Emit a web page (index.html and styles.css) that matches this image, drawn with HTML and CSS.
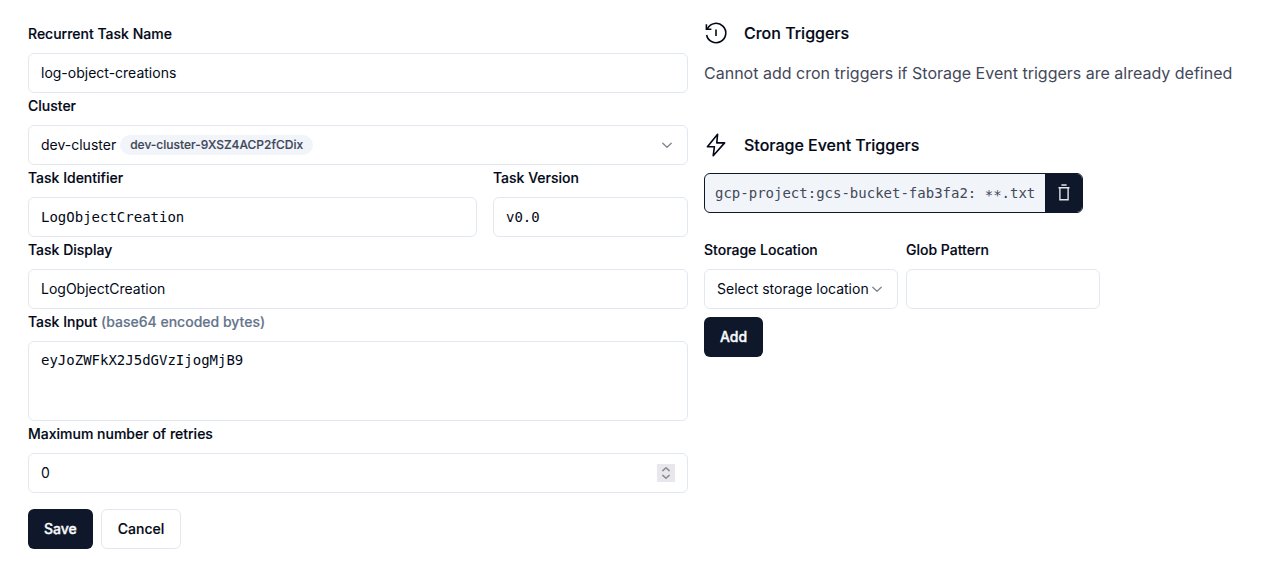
FILE: index.html
```html
<!DOCTYPE html>
<html lang="en">
<head>
<meta charset="utf-8">
<title>Recurrent Task</title>
<link rel="stylesheet" href="styles.css">
</head>
<body>
<main class="page">
  <form class="task-form">
    <label class="label">Recurrent Task Name</label>
    <div class="field">log-object-creations</div>
    <label class="label">Cluster</label>
    <div class="field select">
      <span class="cluster">dev-cluster <span class="badge">dev-cluster-9XSZ4ACP2fCDix</span></span>
      <svg class="chevron" viewBox="0 0 15 15"><path d="M3.5 5.8 7.5 9.6 11.5 5.8"/></svg>
    </div>
    <div class="pair">
      <div class="identifier"><label class="label">Task Identifier</label><div class="field mono">LogObjectCreation</div></div>
      <div class="version"><label class="label">Task Version</label><div class="field mono">v0.0</div></div>
    </div>
    <label class="label">Task Display</label>
    <div class="field">LogObjectCreation</div>
    <label class="label">Task Input <span class="muted">(base64 encoded bytes)</span></label>
    <div class="field mono textarea">eyJoZWFkX2J5dGVzIjogMjB9</div>
    <label class="label">Maximum number of retries</label>
    <div class="field select"><span>0</span>
      <span class="spinner"><svg viewBox="0 0 18 18"><path d="M5.8 6.6 9 3.8 12.2 6.6M5.8 11.4 9 14.2 12.2 11.4"/></svg></span>
    </div>
    <div class="actions"><button type="button" class="btn primary">Save</button><button type="button" class="btn outline">Cancel</button></div>
  </form>
  <section class="triggers">
    <h2 class="heading"><svg class="icon" viewBox="0 0 24 24"><path d="M12 8.5v6.5M2.6 14a9.7 9.7 0 1 0 .9-6.5L2.4 8.3M2.4 3.3v5h5"/></svg>Cron Triggers</h2>
    <p class="note">Cannot add cron triggers if Storage Event triggers are already defined</p>
    <h2 class="heading storage"><svg class="icon bolt" viewBox="0 0 24 24"><path d="M13.6 1.2 3.4 13.7h7L9.2 22.8 20.6 9.9h-7.8L13.6 1.2Z"/></svg>Storage Event Triggers</h2>
    <div class="trigger"><span class="trigger-name">gcp-project:gcs-bucket-fab3fa2: <span class="glob">**</span>.txt</span>
      <button type="button" class="remove" aria-label="Remove"><svg viewBox="0 0 20 20"><path d="M4.5 4.7h11M7.4 2h5.2M5.9 4.7v12.1h8.2V4.7"/></svg></button>
    </div>
    <div class="new-trigger">
      <div><label class="label">Storage Location</label><div class="field select location"><span>Select storage location</span><svg class="chevron" viewBox="0 0 15 15"><path d="M3.5 5.8 7.5 9.6 11.5 5.8"/></svg></div></div>
      <div><label class="label">Glob Pattern</label><div class="field"></div></div>
    </div>
    <button type="button" class="btn primary">Add</button>
  </section>
</main>
</body>
</html>
```
FILE: styles.css
```css
* { box-sizing: border-box; }
body { margin: 0; background: #fff; color: #020817; font: 14px/20px Inter, sans-serif; }
.page { display: grid; grid-template-columns: 660px 536px; gap: 16px; padding: 21px 28px; }
.label { display: block; height: 32px; padding-top: 3px; font-weight: 500; white-space: nowrap; -webkit-text-stroke: 0.15px currentColor; }
.muted { color: #64748b; }
.field { height: 40px; padding: 9px 12px; border: 1px solid #e2e8f0; border-radius: 6px; white-space: nowrap; }
.mono { font-family: "DejaVu Sans Mono", monospace; }
.select { display: flex; align-items: center; justify-content: space-between; }
.cluster { display: flex; align-items: center; gap: 4px; }
.badge { padding: 0 10px; height: 20px; border-radius: 10px; background: #f1f5f9; color: #3f465a; font-size: 12px; font-weight: 500; -webkit-text-stroke: 0.15px currentColor; }
svg { fill: none; stroke: currentColor; stroke-linecap: round; stroke-linejoin: round; }
.chevron { width: 16px; height: 16px; flex: none; color: #80848c; stroke-width: 1.2; }
.pair { display: grid; grid-template-columns: 449px 195px; gap: 16px; }
.textarea { height: 80px; padding-top: 8px; }
.spinner { width: 18px; height: 18px; background: #e8e7eb; color: #8b8a93; }
.spinner svg { display: block; width: 18px; height: 18px; stroke-width: 1.5; }
.actions { display: flex; gap: 8px; margin-top: 16px; }
.btn { height: 40px; padding: 0 16px; border: 0; border-radius: 6px; font: 500 14px/20px Inter, sans-serif; -webkit-text-stroke: 0.15px currentColor; }
.primary { background: #0f172a; color: #f8fafc; -webkit-text-stroke-width: 0.4px; }
.outline { border: 1px solid #e2e8f0; background: #fff; color: #020817; }
.heading { display: flex; align-items: center; gap: 16px; height: 24px; margin: 0; font-size: 16px; font-weight: 500; line-height: 24px; -webkit-text-stroke: 0.15px currentColor; }
.icon { width: 24px; height: 24px; stroke-width: 1.6; stroke-linecap: butt; stroke-linejoin: miter; }
.bolt { stroke-linejoin: round; }
.note { margin: 16px 0 48px; color: #43485a; font-size: 16px; line-height: 24px; white-space: nowrap; }
.trigger { display: flex; width: 379px; height: 40px; margin: 16px 0 24px; border: 1px solid #0f172a; border-radius: 6px; overflow: hidden; background: #f1f5f9; }
.trigger-name { flex: 1; padding: 9px 10px; color: #43485a; font: 14px/20px "DejaVu Sans Mono", monospace; white-space: nowrap; }
.glob { line-height: 0; vertical-align: -2px; }
.remove { display: flex; width: 38px; padding: 0 9px; align-items: center; border: 0; background: #0f172a; color: #e2e5ea; }
.remove svg { width: 20px; height: 20px; stroke-width: 1.4; stroke-linecap: butt; stroke-linejoin: miter; }
.new-trigger { display: grid; grid-template-columns: 194px 194px; gap: 8px; margin-bottom: 8px; }
```
